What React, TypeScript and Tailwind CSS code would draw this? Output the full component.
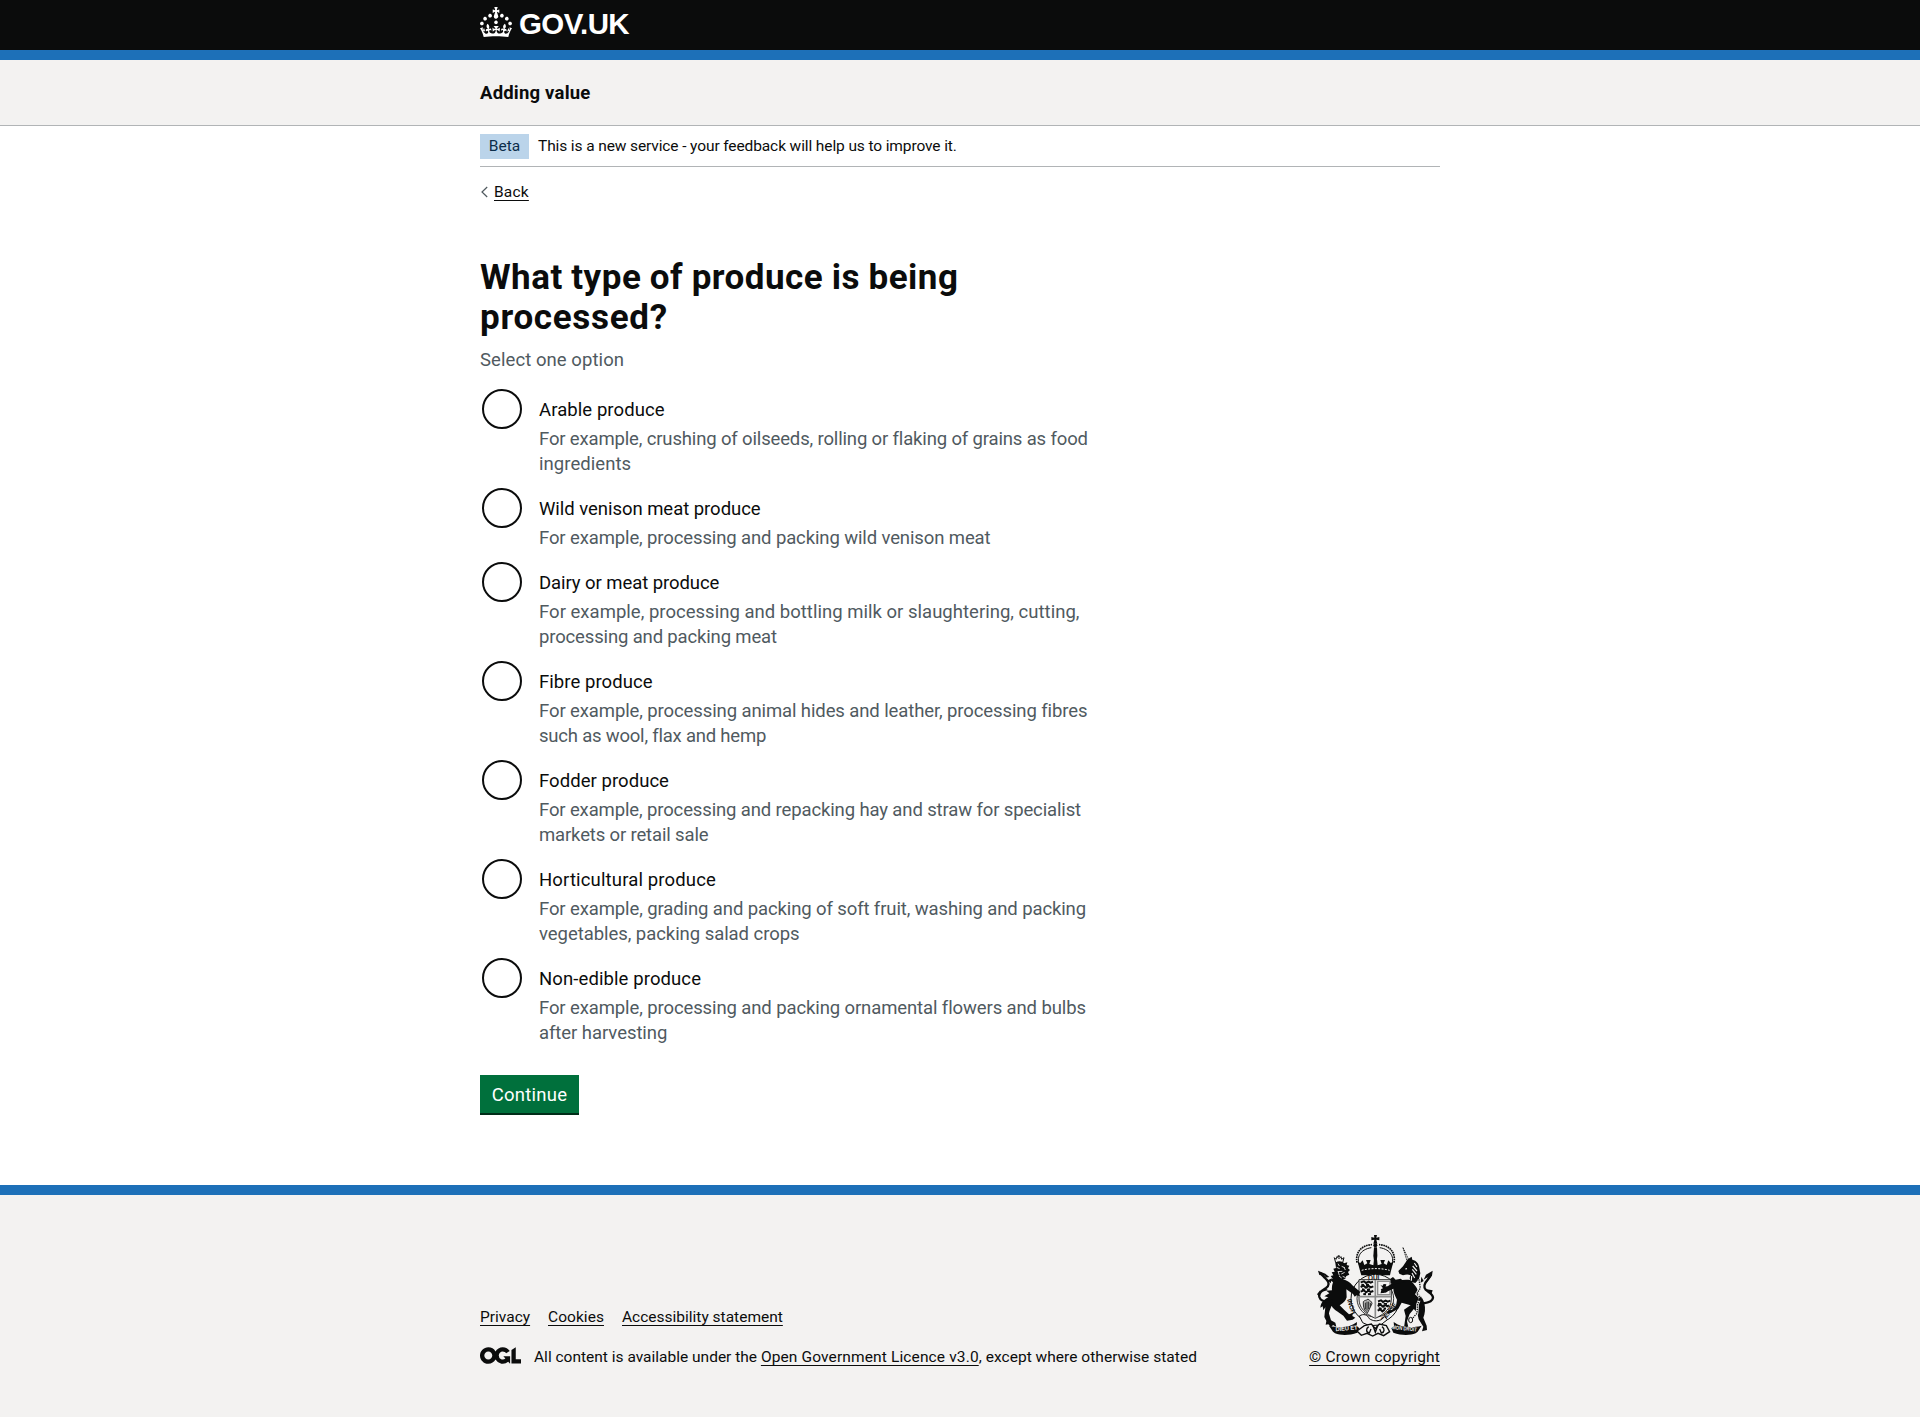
import React from "react";

type Line = { text: string; tracking: string };
type Option = { id: string; label: Line; hint: Line[] };

const options: Option[] = [
  {
    id: "arable",
    label: { text: "Arable produce", tracking: "tracking-[0.08px]" },
    hint: [
      { text: "For example, crushing of oilseeds, rolling or flaking of grains as food", tracking: "tracking-[-0.15px]" },
      { text: "ingredients", tracking: "tracking-[0.06px]" },
    ],
  },
  {
    id: "venison",
    label: { text: "Wild venison meat produce", tracking: "tracking-[-0.04px]" },
    hint: [{ text: "For example, processing and packing wild venison meat", tracking: "tracking-[-0.12px]" }],
  },
  {
    id: "dairy",
    label: { text: "Dairy or meat produce", tracking: "tracking-[-0.07px]" },
    hint: [
      { text: "For example, processing and bottling milk or slaughtering, cutting,", tracking: "tracking-[0.02px]" },
      { text: "processing and packing meat", tracking: "tracking-[-0.15px]" },
    ],
  },
  {
    id: "fibre",
    label: { text: "Fibre produce", tracking: "tracking-[0.06px]" },
    hint: [
      { text: "For example, processing animal hides and leather, processing fibres", tracking: "tracking-[-0.105px]" },
      { text: "such as wool, flax and hemp", tracking: "tracking-[-0.21px]" },
    ],
  },
  {
    id: "fodder",
    label: { text: "Fodder produce", tracking: "tracking-[0.05px]" },
    hint: [
      { text: "For example, processing and repacking hay and straw for specialist", tracking: "tracking-[-0.13px]" },
      { text: "markets or retail sale", tracking: "tracking-[-0.15px]" },
    ],
  },
  {
    id: "horticultural",
    label: { text: "Horticultural produce", tracking: "tracking-[0.15px]" },
    hint: [
      { text: "For example, grading and packing of soft fruit, washing and packing", tracking: "tracking-[-0.11px]" },
      { text: "vegetables, packing salad crops", tracking: "tracking-[-0.05px]" },
    ],
  },
  {
    id: "non-edible",
    label: { text: "Non-edible produce", tracking: "tracking-[0.1px]" },
    hint: [
      { text: "For example, processing and packing ornamental flowers and bulbs", tracking: "tracking-[-0.11px]" },
      { text: "after harvesting", tracking: "tracking-[-0.06px]" },
    ],
  },
];

const link = "underline decoration-1 underline-offset-[3px] [text-decoration-skip-ink:none]";

function Crown() {
  return (
    <svg viewBox="0 0 32 30" className="h-[30px] w-8 shrink-0 fill-white" aria-hidden="true">
      <path d="M22.6 10.4c-1 .4-2-.1-2.4-1-.4-.9.1-2 1-2.4.9-.4 2 .1 2.4 1s-.1 2-1 2.4m-5.9 6.7c-.9.4-2-.1-2.4-1-.4-.9.1-2 1-2.4.9-.4 2 .1 2.4 1s-.1 2-1 2.4m10.8-3.7c-1 .4-2-.1-2.4-1-.4-.9.1-2 1-2.4.9-.4 2 .1 2.4 1s0 2-1 2.4m3.3 4.8c-1 .4-2-.1-2.4-1-.4-.9.1-2 1-2.4.9-.4 2 .1 2.4 1s-.1 2-1 2.4M17 4.7l2.3 1.2V2.5l-2.3.7-.2-.2.9-3h-3.4l.9 3-.2.2c-.1.1-2.3-.7-2.3-.7v3.4L15 4.7c.1.1.1.2.2.2l-1.3 4c-.1.2-.1.4-.1.6 0 1.1.8 2 1.9 2.2h.7c1-.2 1.9-1.1 1.9-2.1 0-.2 0-.4-.1-.6l-1.3-4c-.1-.2 0-.2.1-.3m-7.6 5.7c.9.4 2-.1 2.4-1 .4-.9-.1-2-1-2.4-.9-.4-2 .1-2.4 1s0 2 1 2.4m-5 3c.9.4 2-.1 2.4-1 .4-.9-.1-2-1-2.4-.9-.4-2 .1-2.4 1s.1 2 1 2.4m-3.2 4.8c.9.4 2-.1 2.4-1 .4-.9-.1-2-1-2.4-.9-.4-2 .1-2.4 1s0 2 1 2.4m14.8 11c4.4 0 8.6.3 12.3.8 1.1-4.5 2.4-7 3.7-8.8l-2.5-.9c.2 1.3.3 1.9 0 2.7-.4-.4-.8-1.1-1.1-2.3l-1.2 4c.7-.5 1.3-.8 2-.9-1.1 2.5-2.6 3.1-3.5 3-1.1-.2-1.7-1.2-1.5-2.1.3-1.2 1.5-1.5 2.1-.1 1.1-2.3-.8-3-2-2.3 1.9-1.9 2.1-3.5.6-5.6-2.1 1.6-2.1 3.2-1.2 5.5-1.2-1.4-3.2-.6-2.5 1.6.9-1.4 2.1-.5 1.9.8-.2 1.1-1.7 2.1-3.5 1.9-2.7-.2-2.9-2.1-2.9-3.6.7-.1 1.9.5 2.9 1.9l.4-4.3c-1.1 1.1-2.1 1.4-3.2 1.4.4-1.2 2.1-3 2.1-3h-5.4s1.7 1.9 2.1 3c-1.1 0-2.1-.2-3.2-1.4l.4 4.3c1-1.4 2.2-2 2.9-1.9-.1 1.5-.2 3.4-2.9 3.6-1.9.2-3.4-.8-3.5-1.9-.2-1.3 1-2.2 1.9-.8.7-2.3-1.2-3-2.5-1.6.9-2.2.9-3.9-1.2-5.5-1.5 2-1.3 3.7.6 5.6-1.2-.7-3.1 0-2 2.3.6-1.4 1.8-1.1 2.1.1.2.9-.3 1.9-1.5 2.1-.9.2-2.4-.5-3.5-3 .6 0 1.2.3 2 .9l-1.2-4c-.3 1.1-.7 1.9-1.1 2.3-.3-.8-.2-1.4 0-2.7l-2.9.9C1.3 23 2.6 25.5 3.7 30c3.7-.5 7.9-.8 12.3-.8" />
    </svg>
  );
}

function OglLogo() {
  return (
    <svg viewBox="0 0 483.2 195.7" className="mr-[13px] h-[17px] w-[41px] shrink-0 fill-[#0b0c0c]" aria-hidden="true">
      <path d="M421.5 142.8V.1l-50.7 32.3v161.1h112.4v-50.7zm-122.3-9.6A47.12 47.12 0 0 1 221 97.8c0-26 21.1-47.1 47.1-47.1 16.7 0 31.4 8.7 39.7 21.8l42.7-27.2A97.63 97.63 0 0 0 268.1 0c-36.5 0-68.3 20.1-85.1 49.7A98 98 0 0 0 97.8 0C43.9 0 0 43.9 0 97.8s43.9 97.8 97.8 97.8c36.5 0 68.3-20.1 85.1-49.7a97.76 97.76 0 0 0 149.6 25.4l19.4 22.2h3v-87.8h-80l24.3 27.5zM97.8 145c-26 0-47.1-21.1-47.1-47.1s21.1-47.1 47.1-47.1 47.1 21.1 47.1 47.1S123.8 145 97.8 145" />
    </svg>
  );
}

function RoyalArms() {
  return (
    <svg viewBox="0 0 390 330" className="h-[110px] w-[130px]" fill="#0b0c0c" stroke="none" aria-hidden="true">
      {/* crown */}
      <path d="M192 15h9l-2 8 9-2v10l-9-2 3 12h-12l3-12-9 2V21l9 2z" />
      <circle cx="196" cy="46" r="6" />
      <path d="M192 52h9l1 26-3 22h-6l-3-22z" />
      <path d="M150 108C137 84 150 58 184 53M243 108C256 84 243 58 209 53" fill="none" stroke="#0b0c0c" strokeWidth="3" />
      <path d="M141 98C135 66 156 45 186 44M252 98C258 66 237 45 207 44" fill="none" stroke="#0b0c0c" strokeWidth="5" strokeDasharray="5 2" />
      <path d="M142 92l8 8 8-9 5 14 9-5-4-10h14l-4 12 12 4 2-18h9l2 18 12-4-4-12h14l-4 10 9 5 5-14 8 9 8-8-9 34-2 10H154l-3-10z" />
      <path d="M155 121c26-7 58-7 84 0" fill="none" stroke="#f3f2f1" strokeWidth="3" strokeDasharray="6 4" />

      {/* garter */}
      <circle cx="196" cy="206" r="73" fill="#f3f2f1" stroke="#0b0c0c" strokeWidth="3" />
      <circle cx="196" cy="206" r="55" fill="#f3f2f1" stroke="#0b0c0c" strokeWidth="2.5" />
      <g fontFamily="Liberation Sans, sans-serif" fontWeight="bold" fontSize="19">
        <text x="174" y="150">QUI</text>
        <text transform="translate(138 250) rotate(-108)">HONI</text>
        <text transform="translate(222 275) rotate(-52)">PENSE</text>
      </g>

      {/* quartered shield */}
      <path d="M147 149h97v58c0 26-18 44-48 58-31-14-49-32-49-58z" fill="#f3f2f1" stroke="#0b0c0c" strokeWidth="2.5" />
      <g fill="none" stroke="#0b0c0c" strokeWidth="6">
        <path d="M152 157l10-3 6 5 8-4 6 3 7-3M152 171l9-4 7 6 8-5 6 4 8-3M152 185l10-4 6 6 8-5 6 4 8-3M154 164l8 1m6 0 9-1m-21 14 8 1m7 0 9-1m-20 14 8 1m6 0 9-1" />
        <path d="M204 214l9-3 6 5 8-4 6 3 8-3M203 228l9-4 7 6 7-5 6 4 5-3M203 242l8-4 6 6 7-5M204 221l10 1m7-1 10 1m-25 13 9 1m6-1 7 1" />
      </g>
      <path d="M196 149v116M147 200h97" stroke="#8d8e8d" strokeWidth="5" />
      <rect x="203" y="154" width="37" height="40" fill="none" stroke="#8d8e8d" strokeWidth="4" />
      <path d="M211 164l6 4 4-6 8 1-2 7 6-2-5 9 5 6-6 6-3-7-6 7-7 1 6-8-5-4 7-3z" />
      <path d="M160 215c4-5 9-3 14-8 6 6 11 6 12 14l-13 27c-8-4-14-13-13-33zm6 3v20m5-23v27m5-27v22m5-18v10" fill="#b9b9b8" stroke="#0b0c0c" strokeWidth="2.5" />

      {/* lion */}
      <path d="M73 83l4 15h21l4-15-7 5-2-8-6 6-6-6-3 8zM84 80c-5-4 8-4 5 0z" fill="none" stroke="#0b0c0c" strokeWidth="3" />
      <path d="M76 98c10-6 20-5 26 2l10-3-2 8 8 2-4 8 6 5-6 6 4 8-9 4-3 8-7 2c12 3 20 8 28 18l24 20-4 6 3 7-10-3-6 4-5-8-20-14 1 24c-3 11-10 17-21 24l14 14 14 13 12-4-2 9 9 5-8 6-17 3-11-15-19-13c-8-6-14-11-16-17-4 10-8 17-8 24l6 20 13 7 3 12-10-5-6 7-8-9-8 1 2-11-6-12 3-29-6 9-2-12-7 4c2-17 12-25 24-31l-12-3 15-9-9-8 17-1c-1-8 0-16 3-24l-9-8 8-3-6-8 8-2-5-9 9-2-4-9 8-2z" />
      <path d="M80 112l9 4m6-7 9 4m-20 12 13-1m-3 8 10-5m-20-4 4 13m14-25 4 9m-19 18 8 6m3-5 9 4m-23-42 4 7" stroke="#f3f2f1" strokeWidth="2.5" fill="none" />
      <path d="M68 213c-20 4-36 0-40-12-3-10 8-20 20-27 10-7 10-17 2-25-6-6-12-11-18-20" fill="none" stroke="#0b0c0c" strokeWidth="7" />
      <path d="M24 122l22 9 12 10-20 4 9-7-19-3zM53 151l13-6-4 15zM21 193l10-13-2 20zM43 174l-6 11 17-5z" />

      {/* unicorn */}
      <path d="M279 53l20 42-6 4z" fill="none" stroke="#0b0c0c" strokeWidth="2.5" strokeDasharray="5 2" />
      <path d="M293 88l12-8 2 9c13 2 20 13 21 25l3 16-4 17-11 12-13-3c-5-9-5-14-1-20-8-4-14-3-23 0l-11-5-3-8 14-14z" />
      <path d="M313 99l8 12m-13-3 13 15m-14-5 12 15m-13-4 8 15m-9-6-1 14m-18-35 5-1" fill="none" stroke="#f3f2f1" strokeWidth="3.5" />
      <path d="M300 150c14 14 24 24 25 41 9 9 15 16 18 29 4 17 2 31-3 43l10 24 1 13-15 4 4-14-14-22-4-19-20-23-27-8-10 18-23 13-11 2 4-10 11-1 12-12 3-19c-7-14-11-23-11-33l-28 13-10-1 2-8 30-18c15-10 36-15 56-12z" />
      <path d="M251 164l-9-5-1-13 8-5 8 8 15-3 14 11-26 4z" />
      <path d="M282 239l25-17 7 12-15 18-8 22 4 18-13 2 2-16 3-20z" />
      <path d="M327 148l4 26-11 18 11 11-8 19-2 28-16 18" fill="none" stroke="#f3f2f1" strokeWidth="8" />
      <path d="M327 148l4 26-11 18 11 11-8 19-2 28-16 18" fill="none" stroke="#0b0c0c" strokeWidth="4" strokeDasharray="4 3" />
      <ellipse cx="302" cy="270" rx="6" ry="8" fill="#f3f2f1" stroke="#0b0c0c" strokeWidth="3" />
      <path d="M340 220c16-2 28-6 29-17 0-11-12-15-22-24-7-7-4-19 4-27 5-5 8-9 11-18" fill="none" stroke="#0b0c0c" strokeWidth="7" />
      <path d="M368 122l-20 12-7 15 12-7-2 13 15-18zM341 153l-7-13-2 18zM364 193l-14-15 18 3zM323 211l10-12 5 15z" />

      {/* motto scroll and base */}
      <path d="M57 287c32 8 63 6 84-11l-1 11 8 8-6 13c-25 9-50 8-67 2l-6-5zM335 287c-32 8-63 6-84-11l1 11-8 8 6 13c25 9 50 8 67 2l6-5z" />
      <g fill="#f3f2f1" fontFamily="Liberation Sans, sans-serif" fontWeight="bold" fontSize="17">
        <text transform="translate(77 304) rotate(-5)" textLength="66">DIEU ET</text>
        <text transform="translate(246 297) rotate(6)" textLength="74" lengthAdjust="spacingAndGlyphs">MON DROIT</text>
      </g>
      <path d="M148 258c13-8 24-4 30 8 12 8 22 8 36 3l10-9 8 9-20 16-34 2-20-9z" fill="#f3f2f1" stroke="#0b0c0c" strokeWidth="3" />
      <path d="M163 287l21-5 12 14 12-14 21 5 10 18-18 12-17-7-16 8-17-8-17 6-13-13z" fill="#f3f2f1" stroke="#0b0c0c" strokeWidth="4" />
      <path d="M176 290c-9 6-8 17 2 19l5-12m33-7c9 6 8 17-2 19l-5-12m-20-10 7 20 7-20" fill="none" stroke="#0b0c0c" strokeWidth="4" />
    </svg>
  );
}

function RadioOption({ option }: { option: Option }) {
  return (
    <div className="flex">
      <span className="mt-0.5 ml-0.5 size-10 shrink-0 rounded-full border-2 border-[#0b0c0c] bg-white" />
      <div className="pt-[11px] pl-[17px] leading-[25px] whitespace-nowrap">
        <div className={option.label.tracking}>{option.label.text}</div>
        <div className="mt-1 text-[#505a5f]">
          {option.hint.map((line) => (
            <div key={line.text} className={line.tracking}>
              {line.text}
            </div>
          ))}
        </div>
      </div>
    </div>
  );
}

export default function App() {
  return (
    <div className="flex min-h-[1417px] flex-col bg-white font-[Roboto,'Liberation_Sans',sans-serif] text-[18.5px] text-[#0b0c0c]">
      <header className="h-[60px] border-b-10 border-[#1d70b8] bg-[#0b0c0c]">
        <div className="mx-auto flex w-[960px] items-start pt-[7px] text-white">
          <Crown />
          <span className="ml-[7px] font-['Liberation_Sans',sans-serif] text-[29.5px] leading-[34px] font-bold tracking-[-0.6px]">
            GOV.UK
          </span>
        </div>
      </header>

      <div className="h-[66px] border-b border-[#b1b4b6] bg-[#f3f2f1]">
        <div className="mx-auto w-[960px] pt-[21px] leading-[25px] font-bold tracking-[0.2px]">Adding value</div>
      </div>

      <main className="mx-auto w-[960px]">
        <div className="flex items-center border-b border-[#b1b4b6] pt-2 pb-[7px] text-[15.5px] leading-[25px]">
          <strong className="mr-[9px] w-[49px] bg-[#bbd4ea] text-center font-normal text-[#0c2d4a]">Beta</strong>
          <span className="tracking-[-0.11px]">This is a new service - your feedback will help us to improve it.</span>
        </div>

        <div className="mt-[15px] flex items-center text-[15.5px] leading-5">
          <svg viewBox="0 0 14 12" className="h-3 w-3.5" fill="none" stroke="#505a5f" strokeWidth="1.2" aria-hidden="true">
            <path d="M7.2 1 2 6l5.2 5" />
          </svg>
          <a className={`${link} tracking-[0.2px]`}>Back</a>
        </div>

        <h1 className="mt-14 text-[35px] leading-10 font-bold">
          <span className="block tracking-[0.48px] [word-spacing:-0.6px]">What type of produce is being</span>
          <span className="block tracking-[0.7px]">processed?</span>
        </h1>
        <div className="mt-2.5 leading-[25px] tracking-[0.07px] text-[#505a5f]">Select one option</div>

        <div className="mt-3.5 flex flex-col gap-[9px]">
          {options.map((option) => (
            <RadioOption key={option.id} option={option} />
          ))}
        </div>

        <button className="mt-[29px] mb-[70px] block h-10 w-[99px] border-b-2 border-[#002d18] bg-[#00703c] pt-0.5 leading-[25px] tracking-[0.24px] text-white">
          Continue
        </button>
      </main>

      <footer className="grow border-t-10 border-[#1d70b8] bg-[#f3f2f1] text-[15.5px] leading-5">
        <div className="mx-auto flex w-[960px] items-end justify-between pt-[35px]">
          <div className="flex flex-col gap-5">
            <div className="flex">
              <a className={`${link} w-[68px]`}>Privacy</a>
              <a className={`${link} w-[74px] tracking-[0.05px]`}>Cookies</a>
              <a className={link}>Accessibility statement</a>
            </div>
            <div className="flex items-start">
              <OglLogo />
              <span className="whitespace-nowrap">
                All content is available under the <a className={`${link} tracking-[0.13px]`}>Open Government Licence v3.0</a>
                <span className="tracking-[0.03px]">, except where otherwise stated</span>
              </span>
            </div>
          </div>
          <div className="flex flex-col items-end gap-[7px]">
            <RoyalArms />
            <a className={`${link} tracking-[0.15px]`}>© Crown copyright</a>
          </div>
        </div>
      </footer>
    </div>
  );
}
